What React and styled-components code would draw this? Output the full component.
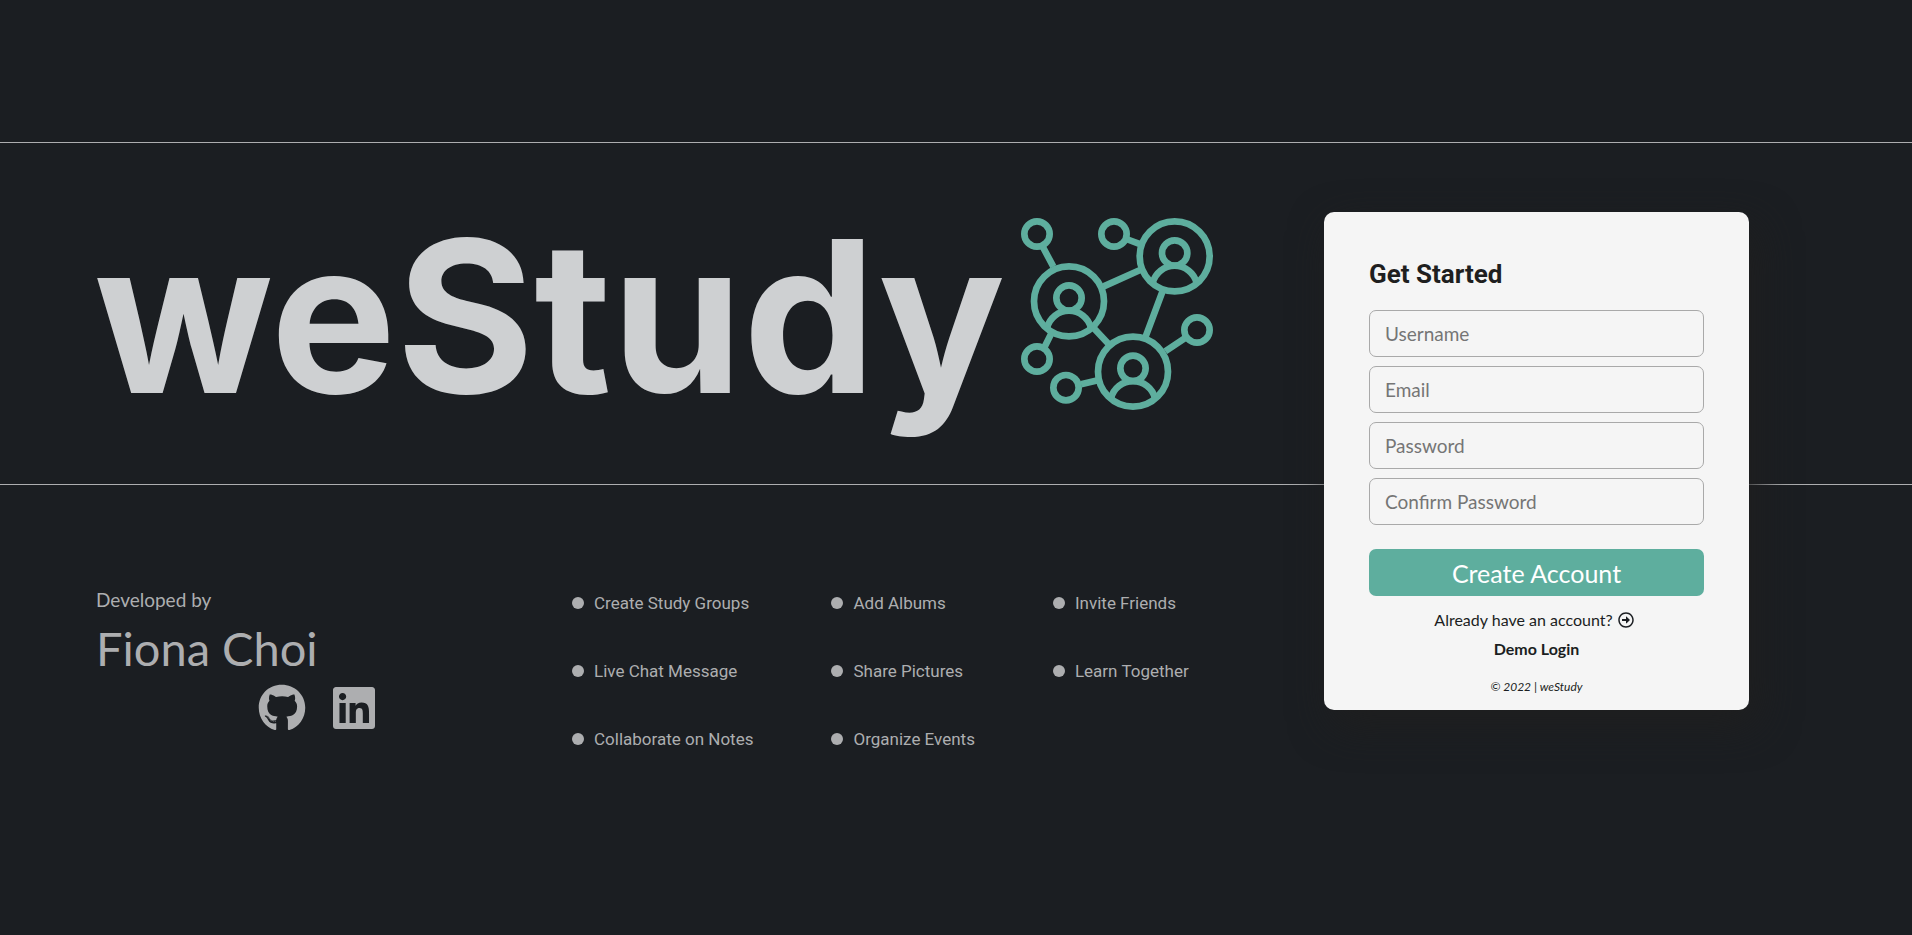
import React from "react";
import styled, { createGlobalStyle } from "styled-components";
import { FaGithub, FaLinkedin, FaRegArrowAltCircleRight } from "react-icons/fa";

const GlobalStyle = createGlobalStyle`
  *, *::before, *::after { box-sizing: border-box; }
  body {
    margin: 0;
    background: #1b1e22;
    color: #adaeb0;
    font-family: Lato, "Liberation Sans", sans-serif;
  }
`;

const Page = styled.div`
  display: grid;
  grid-template-columns: 1fr 425px 163px;
  grid-template-rows: 142px auto 1fr;
  min-height: 100vh;
`;

const Banner = styled.header`
  grid-column: 1 / -1;
  grid-row: 2;
  display: flex;
  align-items: center;
  gap: 16px;
  height: 343px;
  padding: 0 94px;
  border-top: 1px solid #adaeb0;
  border-bottom: 1px solid #adaeb0;
`;

const Title = styled.h1`
  margin: 0;
  padding-top: 6px;
  color: #ced0d2;
  font-family: Inter, "Liberation Sans", sans-serif;
  font-size: 211px;
  font-weight: 700;
  line-height: 240px;
`;

const LogoMark = styled.svg`
  flex: none;
  width: 192px;
  height: 192px;
  fill: none;
  stroke: #5eae9e;
  stroke-width: 20;
`;

const Footer = styled.footer`
  grid-column: 1;
  grid-row: 3;
  display: flex;
  align-items: flex-start;
  padding: 101px 0 0 96px;
`;

const Author = styled.section`
  width: 476px;
`;

const Credit = styled.p`
  margin: 0;
  font-size: 19px;
  line-height: 28px;
`;

const AuthorName = styled.h2`
  margin: 0;
  font-size: 47px;
  font-weight: 400;
  line-height: 68px;
`;

const SocialLinks = styled.nav`
  display: flex;
  gap: 24px;
  padding: 2px 0 0 162px;
`;

const SocialLink = styled.a`
  display: flex;
  color: inherit;
  font-size: 48px;
`;

const Features = styled.ul`
  display: grid;
  grid-auto-flow: column;
  grid-template-rows: repeat(3, 24px);
  gap: 44px 78px;
  margin: 0;
  padding: 5px 0 0;
  list-style: none;
`;

const Feature = styled.li`
  display: flex;
  align-items: center;
  gap: 10px;
  font-family: Roboto, "Liberation Sans", sans-serif;
  font-size: 17px;
  line-height: 24px;
  white-space: nowrap;

  &::before {
    content: "";
    width: 12px;
    height: 12px;
    border-radius: 50%;
    background: currentColor;
  }
`;

const Card = styled.form`
  grid-column: 2;
  grid-row: 2 / 4;
  align-self: start;
  z-index: 1;
  display: flex;
  flex-direction: column;
  margin-top: 70px;
  padding: 40px 45px 13px;
  border-radius: 10px;
  background: #f5f5f5;
  box-shadow: 8px 15px 40px #1f1f1f;
  color: #1b1e22;
`;

const CardTitle = styled.h2`
  margin: 0 0 14px;
  color: #1f1f1f;
  font-family: Roboto, "Liberation Sans", sans-serif;
  font-size: 26px;
  font-weight: 700;
  line-height: 44px;
`;

const Fields = styled.div`
  display: flex;
  flex-direction: column;
  gap: 9px;
`;

const Field = styled.input`
  width: 100%;
  height: 47px;
  padding: 0 15px;
  border: 1px solid #a9a9a9;
  border-radius: 7px;
  background: transparent;
  color: #1b1e22;
  font: 19px Lato, "Liberation Sans", sans-serif;

  &::placeholder { color: #757575; }
`;

const SubmitButton = styled.button`
  height: 47px;
  margin: 24px 0 12px;
  padding: 0;
  border: 0;
  border-radius: 7px;
  background: #5eae9e;
  color: #fff;
  font: 25px Lato, "Liberation Sans", sans-serif;
`;

const CardLink = styled.a`
  display: flex;
  align-items: center;
  align-self: center;
  gap: 5px;
  color: inherit;
  font-size: 16px;
  font-weight: ${({ $strong }) => ($strong ? 700 : 400)};
  line-height: 24px;
  text-decoration: none;

  & + & { margin-top: 5px; }

  svg { margin-right: 5px; }
`;

const Copyright = styled.small`
  margin-top: 16px;
  align-self: center;
  font-size: 12px;
  font-style: italic;
  line-height: 20px;
`;

const FEATURES = [
  "Create Study Groups",
  "Live Chat Message",
  "Collaborate on Notes",
  "Add Albums",
  "Share Pictures",
  "Organize Events",
  "Invite Friends",
  "Learn Together",
];

const FIELDS = [
  { label: "Username", type: "text" },
  { label: "Email", type: "email" },
  { label: "Password", type: "password" },
  { label: "Confirm Password", type: "password" },
];

const MEMBERS = [[524, 169], [207, 304], [399, 515]];
const NODES = [[111, 102], [342, 102], [111, 477], [591, 390], [198, 563]];

function Logo() {
  return (
    <LogoMark viewBox="63 54 576 576" aria-hidden="true">
      {MEMBERS.map(([x, y]) => (
        <g key={x} transform={`translate(${x} ${y})`}>
          <circle r="105" />
          <circle cy="-10" r="38" />
          <path d="M-66 80A68 68 0 0 1 66 80" />
        </g>
      ))}
      {NODES.map(([x, y]) => (
        <circle key={`${x}-${y}`} cx={x} cy={y} r="38" />
      ))}
      <path d="M127 138L160 200M379 117L422 133M311 259L427 207M488 273L436 412M278 381L328 434M496 454L560 411M243 553L294 541M155 398L134 440" />
    </LogoMark>
  );
}

export default function App() {
  return (
    <>
      <GlobalStyle />
      <Page>
        <Banner>
          <Title>weStudy</Title>
          <Logo />
        </Banner>
        <Card onSubmit={(event) => event.preventDefault()}>
          <CardTitle>Get Started</CardTitle>
          <Fields>
            {FIELDS.map(({ label, type }) => (
              <Field key={label} type={type} placeholder={label} aria-label={label} />
            ))}
          </Fields>
          <SubmitButton type="submit">Create Account</SubmitButton>
          <CardLink href="#login">
            Already have an account? <FaRegArrowAltCircleRight />
          </CardLink>
          <CardLink href="#demo" $strong>Demo Login</CardLink>
          <Copyright>© 2022 | weStudy</Copyright>
        </Card>
        <Footer>
          <Author>
            <Credit>Developed by</Credit>
            <AuthorName>Fiona Choi</AuthorName>
            <SocialLinks>
              <SocialLink href="#github" aria-label="GitHub"><FaGithub /></SocialLink>
              <SocialLink href="#linkedin" aria-label="LinkedIn"><FaLinkedin /></SocialLink>
            </SocialLinks>
          </Author>
          <Features>
            {FEATURES.map((feature) => (
              <Feature key={feature}>{feature}</Feature>
            ))}
          </Features>
        </Footer>
      </Page>
    </>
  );
}
